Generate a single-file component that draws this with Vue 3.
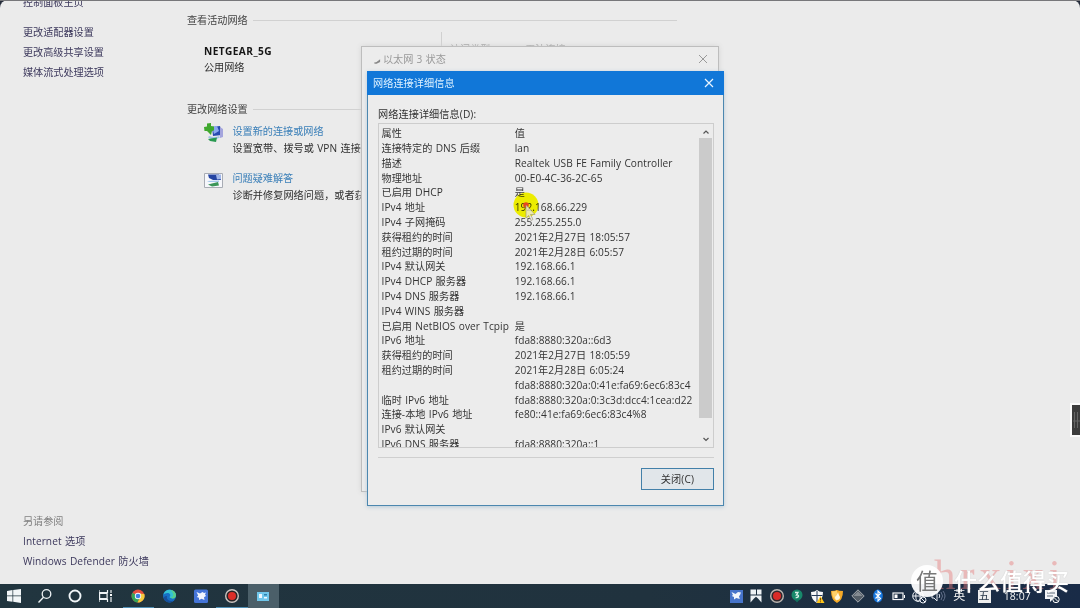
<script setup>
const rows = [
  ['属性', '值'],
  ['连接特定的 DNS 后缀', 'lan'],
  ['描述', 'Realtek USB FE Family Controller'],
  ['物理地址', '00-E0-4C-36-2C-65'],
  ['已启用 DHCP', '是'],
  ['IPv4 地址', '192.168.66.229'],
  ['IPv4 子网掩码', '255.255.255.0'],
  ['获得租约的时间', '2021年2月27日 18:05:57'],
  ['租约过期的时间', '2021年2月28日 6:05:57'],
  ['IPv4 默认网关', '192.168.66.1'],
  ['IPv4 DHCP 服务器', '192.168.66.1'],
  ['IPv4 DNS 服务器', '192.168.66.1'],
  ['IPv4 WINS 服务器', ''],
  ['已启用 NetBIOS over Tcpip', '是'],
  ['IPv6 地址', 'fda8:8880:320a::6d3'],
  ['获得租约的时间', '2021年2月27日 18:05:59'],
  ['租约过期的时间', '2021年2月28日 6:05:24'],
  ['', 'fda8:8880:320a:0:41e:fa69:6ec6:83c4'],
  ['临时 IPv6 地址', 'fda8:8880:320a:0:3c3d:dcc4:1cea:d22'],
  ['连接-本地 IPv6 地址', 'fe80::41e:fa69:6ec6:83c4%8'],
  ['IPv6 默认网关', ''],
  ['IPv6 DNS 服务器', 'fda8:8880:320a::1'],
]
</script>

<template>
  <div class="screen">
    <div class="panel">
      <aside class="side">
        <div class="home">控制面板主页</div>
        <nav class="links">
          <a>更改适配器设置</a>
          <a>更改高级共享设置</a>
          <a>媒体流式处理选项</a>
        </nav>
        <div class="see">
          <span class="dim">另请参阅</span>
          <a>Internet 选项</a>
          <a>Windows Defender 防火墙</a>
        </div>
      </aside>
      <main class="main">
        <div class="section">查看活动网络<i></i></div>
        <div class="network">
          <div class="net-name"><b>NETGEAR_5G</b><span>公用网络</span></div>
          <div class="net-info"><span>访问类型:</span><span>无法连接</span></div>
        </div>
        <div class="section change">更改网络设置<i></i></div>
        <div class="task">
          <svg width="22" height="22" viewBox="0 0 22 22">
            <path d="M9 5l8-1 2 9-9 1z" fill="#284bb0" />
            <path d="M9 5l5-1 2 5-5 3z" fill="#8ba9f0" />
            <path d="M17 5l3 2v8l-3 1z" fill="#a4a5dd" />
            <path d="M4 1.500l4-.5v3l3 .5v4l-2 .5-1 4-3-3-1-1H1.500L1 5l3-.5z" fill="#3fa82d" />
            <path d="M6 14q6 2 10 0l1 1.500q-6 3-12 0z" fill="#a3c3e6" />
            <path d="M5 17l9-1.500L13 20l-6-1z" fill="#299950" />
          </svg>
          <p><a>设置新的连接或网络</a><span>设置宽带、拨号或 VPN 连接</span></p>
        </div>
        <div class="task trouble">
          <svg width="22" height="22" viewBox="0 0 22 22">
            <path d="M1.500 3.500h18v14h-18z" fill="#f6f7fb" stroke="#a8acb4" />
            <path d="M5 4.500h11l2 5.500h-8L6 8z" fill="#2544a2" />
            <path d="M13 5l5-.5V9l-4 .5z" fill="#a1b7e9" />
            <path d="M4 11l12-.5V12H6z" fill="#a4c8ed" />
            <path d="M5 14.500l10-2.500 1 3.500-7 1z" fill="#3b9659" />
          </svg>
          <p><a>问题疑难解答</a><span>诊断并修复网络问题，或者获</span></p>
        </div>
      </main>
    </div>
    <div class="top-edge"></div>

    <section class="status">
      <header>
        <svg class="net-icon" width="8" height="8" viewBox="0 0 9 8"><path d="M1 6l3-1 4-3v3L4 7H2z" fill="#888" /></svg>
        <span>以太网 3 状态</span>
        <svg width="10" height="10" viewBox="0 0 10 10"><path d="M1 1l8 8M9 1L1 9" stroke="#999" fill="none" /></svg>
      </header>
    </section>

    <section class="dialog">
      <header>
        <span>网络连接详细信息</span>
        <svg width="10" height="10" viewBox="0 0 10 10"><path d="M1 1l8 8M9 1L1 9" stroke="#e8f4ff" stroke-width="1.2" fill="none" /></svg>
      </header>
      <div class="body">
        <label>网络连接详细信息(D):</label>
        <div class="list">
          <div class="rows">
            <div v-for="(r, i) in rows" :key="i" class="row"><span>{{ r[0] }}</span><span>{{ r[1] }}</span></div>
          </div>
          <div class="scroll">
            <svg width="14" height="14" viewBox="0 0 14 14"><path d="M4.500 9.500L7 7l2.500 2.500" stroke="#555" fill="none" stroke-width="1.200" /></svg>
            <div class="thumb"></div>
            <svg class="down" width="14" height="14" viewBox="0 0 14 14"><path d="M4.500 6L7 8.500 9.500 6" stroke="#555" fill="none" stroke-width="1.200" /></svg>
          </div>
        </div>
        <div class="rule"></div>
        <div class="foot"><button>关闭(C)</button></div>
      </div>
    </section>

    <svg class="halo" width="28" height="28" viewBox="0 0 28 28"><circle cx="14" cy="14" r="12.500" fill="#fff000" /></svg>
    <svg class="pointer" width="24" height="24" viewBox="0 0 24 24">
      <circle cx="6" cy="5" r="2.800" fill="#e5481e" />
      <path d="M6 5l9 9.500h-4.500l2.500 5-2 1-2.300-5L6 18z" fill="#eeeadb" fill-opacity=".8" stroke="#97917a" stroke-width=".6" />
    </svg>
    <div class="handle"><svg width="8" height="24" viewBox="0 0 8 24"><path d="M2.500 4v16M5.500 4v16M1 13h7" stroke="#666" fill="none" /></svg></div>

    <footer class="taskbar">
      <div class="apps">
        <div class="app"><svg width="16" height="16" viewBox="0 0 16 16"><path d="M1 3l5.500-1v5.500H1zM7.200 1.900L15 1v6.500H7.200zM1 8.200h5.500v5.500L1 13zM7.200 8.200H15V15l-7.800-1.200z" fill="#f2f6f8" /></svg></div>
        <div class="app"><svg width="16" height="16" viewBox="0 0 16 16"><circle cx="9.500" cy="6" r="4.300" fill="none" stroke="#eef3f5" stroke-width="1.300" /><path d="M6.500 9.200L1.500 14.500" stroke="#eef3f5" stroke-width="1.400" /></svg></div>
        <div class="app"><svg width="16" height="16" viewBox="0 0 16 16"><circle cx="7" cy="8" r="5.500" fill="none" stroke="#f0f5f7" stroke-width="1.900" /></svg></div>
        <div class="app"><svg width="16" height="16" viewBox="0 0 16 16"><path d="M0 2v2.500h8.500V2M0 14v-2.500h8.500V14M.6 5.500h7.500v5H.6zM12 2v3M12 9v5" fill="none" stroke="#eef3f5" stroke-width="1.200" /><path d="M11 6h2v2h-2z" fill="#fff" /></svg></div>
        <div class="app running"><svg width="16" height="16" viewBox="0 0 16 16"><circle cx="8" cy="8" r="6.500" fill="#e54e3e" /><path d="M2.400 4.800A6.500 6.500 0 0 0 7.500 14.500L10 9 8 8z" fill="#35a557" /><path d="M14.300 6A6.500 6.500 0 0 1 7.500 14.500L11 8 8 5.500z" fill="#f5ca3c" /><circle cx="8" cy="8" r="3.200" fill="#f4f6f6" /><circle cx="8" cy="8" r="2.300" fill="#3d80e2" /></svg></div>
        <div class="app"><svg width="16" height="16" viewBox="0 0 16 16"><circle cx="7.500" cy="8" r="6.500" fill="#176fc5" /><path d="M1.500 6.500C2.500 2 7.500 .5 11.500 3c3 2 3 6 1 7-2 1-5 0-5-1 2-2 0-4-2-4-2 0-3 .8-4 1.500z" fill="#35c2d2" /><path d="M8.500 2c5 0 7 6 4.200 8-1 .8-3 .5-4-.3 4-1 3-5-.2-7.700z" fill="#59cf8a" /><path d="M5 8c-1 3 2 6 6.500 4.500-2 3-7 2.500-9-.5-1.500-3 0-4 2.500-4z" fill="#174f9b" /></svg></div>
        <div class="app"><svg width="16" height="16" viewBox="0 0 16 16"><rect x="1" y="1.500" width="14" height="13.500" rx="1.500" fill="#4574d7" /><path d="M3.500 4l3.500 1.500L9.500 4l1.500 1L13 4.500l-1 2 1 1.500-2 1.200.5 2.800-3-1.200L6 12l0-2.300L3.800 9l1.400-1.500z" fill="#f2f5fd" /></svg></div>
        <div class="app running"><svg width="16" height="16" viewBox="0 0 16 16"><circle cx="8" cy="8" r="6.300" fill="#292426" stroke="#cbc6c3" stroke-width="1.400" /><circle cx="8" cy="8" r="4" fill="#dc2e29" /></svg></div>
        <div class="app active"><svg width="16" height="16" viewBox="0 0 16 16"><rect x="2" y="4" width="12" height="9" fill="#70c7eb" /><path d="M4 6h3v4H4zM9 9h3v1.500H9z" fill="#edf8ff" /><path d="M9 6h3v1.500H9z" fill="#2c80ac" /></svg></div>
      </div>
      <div class="tray">
        <svg width="16" height="16" viewBox="0 0 16 16"><rect x="2" y="2" width="13" height="13" fill="#4774ca" /><path d="M3.500 4l4 2L10 4l3 .5-1 2.500-1 1.200.8 2.800-3.500-1L6 11.500V9L3.800 8 5 7z" fill="#f2f5fc" /></svg>
        <svg width="16" height="16" viewBox="0 0 16 16"><path d="M2.500 1.500H8v5H2.500zM9 1.500h4.500v5H9zM2.500 7.500h11v7L10 10.500 8 8.800 6 10.500l-3.500 4z" fill="#eef2f5" /></svg>
        <svg width="16" height="16" viewBox="0 0 16 16"><circle cx="8" cy="8" r="6.300" fill="#30282d" stroke="#bbb5b1" stroke-width="1.400" /><circle cx="8" cy="8" r="4" fill="#d92b28" /></svg>
        <svg width="16" height="16" viewBox="0 0 16 16"><circle cx="8" cy="7" r="5.500" fill="#18896b" /><path d="M5.500 11.500h5L8 14.500z" fill="#116f5d" /><path d="M6 4.500h3L7.500 7c3-.5 2.500 3-.8 2.500" fill="none" stroke="#dbf1e9" stroke-width="1.300" /></svg>
        <svg width="16" height="16" viewBox="0 0 16 16"><path d="M2 4q4 0 6-2 2 2 6 2 0 8-6 11-6-3-6-11z" fill="#f7f8fa" /><path d="M8 3v11M2.500 7.500h11" stroke="#263b59" /><path d="M11.500 8l4 7h-8z" fill="#ffc61b" /><path d="M11.500 10v2.500M11.500 13.300v1" stroke="#7b4c10" /></svg>
        <svg width="16" height="16" viewBox="0 0 16 16"><path d="M2 3q4 0 6-1 2 1 6 1 0 9-6 12-6-3-6-12z" fill="#f5aa28" /><path d="M3 3.500q3 0 5-1V13Q3 10 3 3.500z" fill="#ffd069" /><path d="M9 4q-1 4-3 5 0 3 2 3 3 0 3-3-1-1-2-5z" fill="#fff7df" /></svg>
        <svg width="16" height="16" viewBox="0 0 16 16"><path d="M8 1.800L14.200 8 8 14.200 1.800 8z" fill="#555f68" stroke="#a3a9ae" /><path d="M8 3.500L12.500 8H3.500z" fill="#858c92" /></svg>
        <svg width="16" height="16" viewBox="0 0 16 16"><ellipse cx="8" cy="8" rx="4.800" ry="6.500" fill="#1878df" /><path d="M5.500 5.500l5 5L8 13V3l2.500 2.500-5 5" stroke="#fff" fill="none" stroke-width="1.100" /></svg>
        <svg width="16" height="16" viewBox="0 0 16 16"><rect x="3" y="5" width="10" height="6.500" fill="none" stroke="#f3f5f7" stroke-width="1.200" /><path d="M4.500 6.500h3V10h-3zM14 7h1v3h-1z" fill="#fff" /></svg>
        <svg width="16" height="16" viewBox="0 0 16 16"><circle cx="7" cy="8" r="5.300" fill="none" stroke="#edf0f5" /><ellipse cx="7" cy="8" rx="2.200" ry="5.300" fill="none" stroke="#edf0f5" /><path d="M2 8h10" stroke="#edf0f5" /><circle cx="12" cy="12" r="3" fill="#1b2c43" stroke="#edf0f5" /><path d="M10 10l4 4" stroke="#edf0f5" /></svg>
        <svg width="16" height="16" viewBox="0 0 16 16"><path d="M1 6h2l3-3v10l-3-3H1z" fill="none" stroke="#dfe4ec" /><path d="M8 6q1.500 2 0 4" fill="none" stroke="#dfe4ec" /><path d="M10 4q3 4 0 8M12 3q4 5 0 10" fill="none" stroke="#63708a" /></svg>
        <span class="ime">英</span>
        <span class="wubi">五</span>
        <time>18:07</time>
        <svg class="note" width="16" height="16" viewBox="0 0 16 16"><path d="M1 2h12v9H9l-3 3v-3H1z" fill="#f3f4f7" /><path d="M3 5h8M3 8h6" stroke="#5c6a7a" /><circle cx="12" cy="11.500" r="3.200" fill="#23344a" stroke="#fff" /><path d="M10 9.500l4 4" stroke="#fff" /></svg>
      </div>
    </footer>

    <div class="script-mark">hrxixi</div>
    <div class="brand"><span class="seal">值</span><span class="brand-name">什么值得买</span></div>
  </div>
</template>

<style>
body { margin: 0; overflow: hidden; background: #252c3a; }
</style>
<style scoped>
.screen { position: relative; width: 1080px; height: 608px; overflow: hidden; display: flex; flex-direction: column; background: #252c3a; color: #303030; font: 10.150px/20px "Open Sans", "Noto Sans CJK SC", sans-serif; word-spacing: .6px; white-space: nowrap; }
a { color: inherit; text-decoration: none; }
.panel { display: flex; height: 584px; box-sizing: border-box; background: #ebebeb; border-radius: 8px 8px 0 0; overflow: hidden; }
.top-edge { position: absolute; top: 0; left: 0; width: 1080px; height: 1px; background: #77777a; }
.side { width: 187px; padding-left: 23px; box-sizing: border-box; color: #3c385c; display: flex; flex-direction: column; }
.home { height: 20px; margin-top: -8px; }
.links { margin-top: 10px; display: flex; flex-direction: column; }
.see { margin: auto 0 13px; display: flex; flex-direction: column; }
.see a { letter-spacing: .08px; }
.dim { color: #808080; }
.main { flex: 1; padding-top: 10px; }
.section { display: flex; align-items: center; width: 490px; height: 20px; gap: 5px; color: #444; }
.section i { flex: 1; height: 1px; background: #d1d1d1; }
.network { height: 69px; display: flex; padding-left: 17px; }
.net-name { width: 237px; box-sizing: border-box; padding-top: 13px; display: flex; flex-direction: column; line-height: 16px; }
.net-name b { color: #151515; letter-spacing: .42px; }
.net-info { height: 31px; box-sizing: border-box; border-left: 1px solid #d0d0d0; padding: 8px 0 0 8px; display: flex; gap: 32px; color: #999; margin-top: 2px; line-height: 18px; }
.task { display: flex; height: 47px; padding: 2px 0 0 16px; box-sizing: border-box; gap: 7.500px; }
.task p { margin: 2px 0 0; display: flex; flex-direction: column; line-height: 17px; }
.task a { color: #3a7fb8; }
.task span { letter-spacing: .06px; }
.task svg { margin-top: 1px; }
.trouble svg { margin-top: 2px; }
.status { position: absolute; left: 361px; top: 46px; width: 358px; height: 446px; border: 1px solid #bdbdbd; background: #ececec; box-sizing: border-box; box-shadow: 0 0 5px #d5d5d5; color: #999; }
.status header { display: flex; align-items: center; height: 23px; padding: 0 10px 0 11px; gap: 2px; }
.status header span { flex: 1; }
.net-icon { margin-top: 5px; }
.dialog { position: absolute; left: 367px; top: 71px; width: 357px; height: 435px; box-sizing: border-box; border: 1px solid #4c87af; background: #ececec; box-shadow: 0 1px 4px #b5cad7; }
.dialog header { height: 24px; margin: -1px -1px 0; background: #1177d8; color: #dff2ff; display: flex; align-items: center; justify-content: space-between; padding: 0 10px 0 6px; letter-spacing: .08px; }
.body { padding: 9px 9px 0 10px; }
label { display: block; height: 19px; letter-spacing: .1px; }
.list { height: 325px; border: 1px solid #cdcdcd; box-sizing: border-box; display: flex; overflow: hidden; color: #343434; letter-spacing: .06px; }
.rows { flex: 1; padding: 2.200px 0 0 2.500px; }
.row { height: 14.800px; line-height: 14.800px; display: grid; grid-template-columns: 133.200px 1fr; }
.scroll { width: 14px; height: 323px; display: flex; flex-direction: column; }
.scroll svg { flex: none; }
.thumb { width: 13px; height: 280px; background: #cbcbcb; }
.down { margin-top: 14px; }
.rule { height: 1px; background: #cfcfcf; margin-top: 9px; }
.foot { display: flex; justify-content: flex-end; margin-top: 10px; }
button { width: 73px; height: 22px; box-sizing: border-box; border: 1px solid #4380a9; background: #e1e6ea; padding: 0; font: inherit; color: #303030; letter-spacing: .2px; }
.halo { position: absolute; left: 512px; top: 191px; mix-blend-mode: multiply; filter: brightness(1.1); }
.pointer { position: absolute; left: 520px; top: 200px; }
.handle { position: absolute; right: 0; top: 405px; width: 8px; height: 30px; background: #3c3c3c; outline: 2px solid #fafafa; display: flex; align-items: center; }
.taskbar { height: 24px; display: flex; justify-content: space-between; background: linear-gradient(90deg, #21353f, #20323e 60%, #192b47); color: #f5f5f5; }
.apps, .tray { display: flex; align-items: center; }
.app { display: flex; align-items: center; justify-content: center; width: 31.200px; height: 24px; box-sizing: border-box; }
.apps { margin-left: -2px; }
.running { box-shadow: inset 0 -1px #4f8fb5; }
.active { background: #4b5f69; }
.tray { gap: 4.300px; width: 352px; }
.ime { width: 16px; font-size: 12px; margin-left: 2px; }
.wubi { background: #eee; color: #283748; width: 13px; height: 13px; line-height: 12px; font-size: 11px; text-align: center; margin-left: 4px; }
time { margin-left: 9px; font-size: 10.500px; }
.note { margin-left: 9px; }
.script-mark { position: absolute; left: 934px; top: 550px; font: 43px/50px "Liberation Serif", serif; letter-spacing: 4.800px; color: rgba(230, 125, 125, .45); }
.brand { position: absolute; left: 911px; top: 565px; display: flex; align-items: center; color: #fff; }
.seal { width: 32px; height: 32px; border-radius: 50%; background: rgba(255,255,255,.94); color: #777; font-size: 22px; line-height: 31px; text-align: center; }
.brand-name { font-size: 23px; font-weight: 500; line-height: 30px; margin-left: 11px; text-shadow: 0 0 1px #bbb; }
</style>
